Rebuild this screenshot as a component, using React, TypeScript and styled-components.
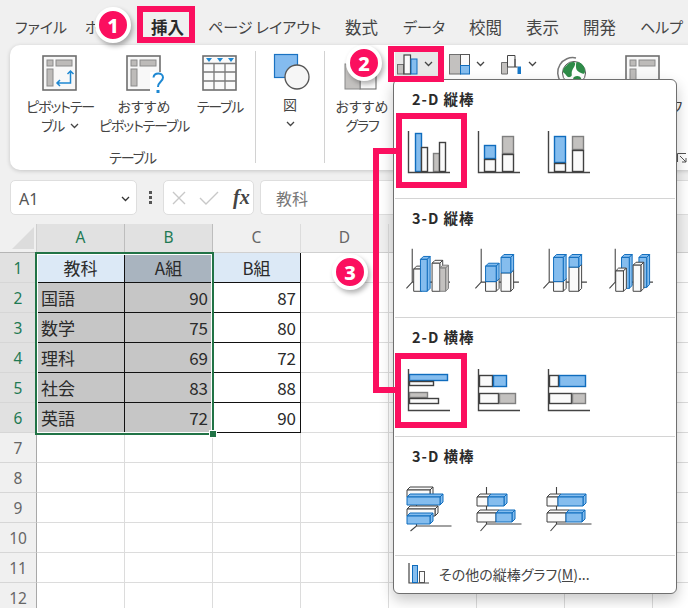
import React from 'react';
import styled, { createGlobalStyle } from 'styled-components';

const PINK = '#fb0f5f';
const BLUE = { f: '#85bdee', s: '#0f6cbd' };
const GRAY = { f: '#c3c1bf', s: '#7f7f7f' };
const WHITE = { f: '#fafafa', s: '#404040' };
type Tone = typeof BLUE;

const Global = createGlobalStyle`
  html, body { margin: 0; padding: 0; background: #f0f0f0; }
  * { box-sizing: border-box; }
  body { font-family: "Noto Sans CJK JP", "Noto Sans", sans-serif; font-feature-settings: "palt"; }
`;

const Page = styled.div`
  position: relative; width: 688px; height: 608px; overflow: hidden;
  background: #f0f0f0; display: flex; flex-direction: column; color: #333;
`;
const TabBar = styled.div`
  height: 45px; flex: none; display: flex; align-items: center; gap: 24px; padding: 0 0 0 15px; white-space: nowrap;
`;
const Tab = styled.span<{ $active?: boolean; $w: number; $kanji?: boolean }>`
  width: ${p => p.$w}px; flex: none;
  font-size: ${p => (p.$kanji ? 16.5 : 15)}px; line-height: 20px; margin-top: 9px;
  color: ${p => (p.$active ? '#2a2a2a' : '#454545')};
  font-weight: ${p => (p.$active ? 700 : 400)};
`;
const Ribbon = styled.div`
  position: relative; flex: none; height: 125px; margin-left: 10px; width: 700px; background: #fff;
  border-radius: 10px 0 0 10px; box-shadow: 0 1px 4px rgba(0,0,0,.18); display: flex;
`;
const Group = styled.div<{ $w: number }>`
  width: ${p => p.$w}px; flex: none; display: flex; flex-direction: column; align-items: stretch; padding-top: 7px;
`;
const GroupItems = styled.div`flex: 1; display: flex; align-items: flex-start;`;
const GroupLabel = styled.div`
  height: 23px; font-size: 14px; line-height: 20px; text-align: center; color: #444; letter-spacing: -1.1px;
`;
const Sep = styled.div`width: 1px; flex: none; margin: 6px 0 7px; background: #d2d2d2;`;
const RibbonBtn = styled.div<{ $w: number; $ml?: number; $iconH?: number }>`
  width: ${p => p.$w}px; margin-left: ${p => p.$ml ?? 0}px; flex: none; display: flex; flex-direction: column; align-items: center;
  font-size: 14px; line-height: 19px; color: #444; white-space: nowrap; text-align: center;
  & > svg:first-child { height: ${p => p.$iconH ?? 45}px; flex: none; overflow: visible; }
`;
const BtnLine = styled.div<{ $tight?: boolean }>`
  display: flex; align-items: center; justify-content: center; gap: 4px; height: 19px;
  letter-spacing: ${p => (p.$tight ? '-1.15px' : '0')};
`;
const MiniBtn = styled.div<{ $hover?: boolean }>`
  width: 52px; flex: none; height: 24px; display: flex; align-items: center; gap: 6px; padding-left: 2px;
  background: ${p => (p.$hover ? 'linear-gradient(#e8e8e8, #e8e8e8) no-repeat 0 0 / 44px 100%' : 'transparent')};
`;
const Launcher = styled.svg`position: absolute; left: 667px; top: 108px;`;

const FormulaBar = styled.div`
  flex: none; height: 35px; margin-top: 10px; display: flex; align-items: stretch; padding-left: 10px;
`;
const Field = styled.div<{ $w?: number }>`
  ${p => (p.$w ? `width: ${p.$w}px; flex: none;` : 'flex: 1;')}
  background: #fff; border: 1px solid #dedede; border-radius: 5px; display: flex; align-items: center;
`;
const NameBox = styled(Field)`padding: 2px 6px 0 8px; justify-content: space-between; font: 16px "Noto Sans", sans-serif; color: #555;`;
const Dots = styled.div`
  width: 26px; flex: none; display: flex; flex-direction: column; align-items: center; justify-content: center; gap: 2px;
`;
const Dot = styled.i`display: block; width: 3px; height: 3px; background: #555;`;
const FnBox = styled(Field)`padding: 0 0 0 8px; gap: 13px;`;
const Fx = styled.span`font: italic 700 20px "Liberation Serif", serif; color: #444; margin-left: 1px;`;
const FormulaInput = styled(Field)`margin-left: 6px; padding-left: 15px; font-size: 16px; color: #777; border-radius: 5px 0 0 5px; border-right: 0;`;

const Sheet = styled.div`
  margin-top: 9px; flex: none; display: grid; grid-template-columns: 37px repeat(8, 88px);
  grid-template-rows: 29px repeat(12, 30px); width: 741px;
`;
const Corner = styled.div`
  background: #f0f0f0; border-right: 1px solid #cfcfcf; border-bottom: 1px solid #b5b5b5; position: relative;
  &::after { content: ''; position: absolute; left: 12px; top: 3px; border-style: solid; border-width: 0 0 22px 22px; border-color: transparent transparent #dcdcdc transparent; }
`;
const ColHead = styled.div<{ $sel?: boolean }>`
  display: flex; align-items: center; justify-content: center; padding-bottom: 2px;
  font: 15.5px "Noto Sans", sans-serif;
  background: ${p => (p.$sel ? '#e1e1e1' : '#f0f0f0')};
  color: ${p => (p.$sel ? '#1f7a54' : '#666')};
  border-right: 1px solid ${p => (p.$sel ? '#bdbdbd' : '#dcdcdc')};
  border-bottom: 1px solid #d0d0d0;
`;
const RowHead = styled.div<{ $sel?: boolean }>`
  display: flex; align-items: center; justify-content: center;
  font: 15.5px "Noto Sans", sans-serif; width: 37px;
  background: ${p => (p.$sel ? '#e1e1e1' : '#f0f0f0')};
  color: ${p => (p.$sel ? '#1f7a54' : '#666')};
  border-right: 1px solid #a8a8a8; border-bottom: 1px solid #d6d6d6;
`;
const Cell = styled.div<{ $bg?: string; $align?: string; $table?: boolean }>`
  display: flex; align-items: center; padding: 0 4px; font-size: 17px; color: #2b2b2b; padding-bottom: 1px;
  justify-content: ${p => p.$align ?? 'flex-start'};
  background: ${p => p.$bg ?? '#fff'};
  border-right: 1px solid ${p => (p.$table ? '#111' : '#dcdcdc')};
  border-bottom: 1px solid ${p => (p.$table ? '#111' : '#dcdcdc')};
`;
const Selection = styled.div`
  position: absolute; left: 35px; top: 252px; width: 179px; height: 183px;
  border: 2px solid #217346; box-shadow: inset 0 0 0 1px #fff; pointer-events: none;
  &::after { content: ''; position: absolute; right: -4px; bottom: -4px; width: 6px; height: 6px; background: #217346; outline: 1px solid #fff; }
`;

const Menu = styled.div`
  position: absolute; left: 393px; top: 79px; width: 284px; height: 515px; background: #fff; border: 1px solid #6f6f6f;
  border-radius: 6px; box-shadow: 0 6px 14px rgba(0,0,0,.22); display: flex; flex-direction: column;
`;
const MenuSection = styled.div`height: 119px; flex: none; border-bottom: 1px solid #d4d4d4; margin: 0 1px;`;
const MenuHeader = styled.div`
  height: 46px; padding: 9px 0 0 17px; font-size: 14.5px; line-height: 20px; font-weight: 700; color: #2b2b2b; letter-spacing: 1px;
`;
const ChartRow = styled.div`display: flex; padding-left: 9px;`;
const MenuFoot = styled.div`flex: 1; display: flex; align-items: center; padding-left: 14px; gap: 10px; font-size: 14px; color: #444; padding-bottom: 2px;`;
const Mnemonic = styled.span`text-decoration: underline;`;

const Frame = styled.div<{ $x: number; $y: number; $w: number; $h: number }>`
  position: absolute; left: ${p => p.$x}px; top: ${p => p.$y}px; width: ${p => p.$w}px; height: ${p => p.$h}px;
  border: 6px solid ${PINK}; pointer-events: none;
`;
const Connector = styled.div`
  position: absolute; left: 373px; top: 148px; width: 23px; height: 245px;
  border: 6px solid ${PINK}; border-right: 0; pointer-events: none;
`;
const Badge = styled.div<{ $x: number; $y: number }>`
  position: absolute; left: ${p => p.$x - 18}px; top: ${p => p.$y - 18}px; width: 36px; height: 36px; border-radius: 50%;
  background: ${PINK}; border: 4px solid #fff; box-shadow: 2px 3px 5px rgba(0,0,0,.3); color: #fff;
  display: flex; align-items: center; justify-content: center; font: 800 20px "Noto Sans", sans-serif;
`;

const Chevron = ({ c = '#444' }: { c?: string }) => (
  <svg width="9" height="6" viewBox="0 0 9 6"><path d="M1 1l3.5 3.5L8 1" fill="none" stroke={c} strokeWidth="1.3" /></svg>
);

const R = ({ x, y, w, h, t }: { x: number; y: number; w: number; h: number; t: Tone }) => (
  <rect x={x + 0.5} y={y + 0.5} width={w - 1} height={h - 1} fill={t.f} stroke={t.s} strokeWidth={1.4} />
);
const Col2D = ({ children }: { children: React.ReactNode }) => (
  <svg width="70" height="50" viewBox="0 0 70 50">
    {children}
    <path d="M4.5 5V46.5H46" fill="none" stroke="#444" strokeWidth="1.4" />
  </svg>
);
const Box = ({ x, y, w, h, t, d = 3 }: { x: number; y: number; w: number; h: number; t: Tone; d?: number }) => (
  <g stroke={t.s} strokeWidth={1} strokeLinejoin="round">
    <path d={`M${x} ${y}l${d} ${-d}h${w}l${-d} ${d}z`} fill={t.f} />
    <path d={`M${x + w} ${y}l${d} ${-d}v${h}l${-d} ${d}z`} fill={t.f} />
    <rect x={x} y={y} width={w} height={h} fill={t.f} />
  </g>
);
const Col3D = ({ ax = 8.5, children }: { ax?: number; children: React.ReactNode }) => (
  <svg width="70" height="50" viewBox="0 0 70 50">
    <path d={`M${ax} 3V37.5L${ax - 6} 44M${ax} 37.5H${ax + 39}`} fill="none" stroke="#444" strokeWidth="1.1" />
    {children}
  </svg>
);
const Bar3D = ({ ax, gy = 43, children }: { ax: number; gy?: number; children: React.ReactNode }) => (
  <svg width="70" height="50" viewBox="0 0 70 50">
    <path d={`M${ax} 4V${gy}L${ax - 6} 48M${ax} ${gy}H${ax + 35}`} fill="none" stroke="#444" strokeWidth="1.1" />
    {children}
  </svg>
);

const PivotIcon = ({ w = 36, children }: { w?: number; children?: React.ReactNode }) => (
  <svg width={w} height="45" viewBox="0 0 36 45">
    <rect x="1" y="4" width="33" height="34" fill="#f8f8f8" stroke="#6e6e6e" strokeWidth="1.6" />
    <rect x="5" y="8" width="6" height="6" fill="#bdbbb9" stroke="#8a8a8a" />
    <rect x="14" y="8" width="16" height="6" fill="#bdbbb9" stroke="#8a8a8a" />
    <rect x="5" y="17" width="6" height="17" fill="#bdbbb9" stroke="#8a8a8a" />
    {children}
  </svg>
);
const TableIcon = () => (
  <svg width="36" height="45" viewBox="0 0 36 45">
    <rect x="1" y="4" width="33" height="34" fill="#fafafa" stroke="#6e6e6e" strokeWidth="1.6" />
    <path d="M1 11.5H34M1 20H34M1 29H34M12 11.5V38M23 11.5V38" stroke="#7a7a7a" strokeWidth="1.3" />
    <path d="M4 6h6l-3 4zM15 6h6l-3 4zM26 6h6l-3 4z" fill="#1e88d2" />
  </svg>
);
const ShapesIcon = () => (
  <svg width="40" height="43" viewBox="0 0 40 43">
    <rect x="4.5" y="2.5" width="23" height="23" fill="#84bbef" stroke="#1a72c2" strokeWidth="1.2" />
    <circle cx="27" cy="25" r="12" fill="#f6f6f6" stroke="#555" strokeWidth="1.3" />
  </svg>
);
const Globe = () => (
  <svg width="44" height="45" viewBox="0 0 44 45">
    <circle cx="23" cy="21" r="11.5" fill="#fff" stroke="#555" strokeWidth="1" />
    <path d="M10 30A15 15 0 0 1 25 6" fill="none" stroke="#777" strokeWidth="1.5" />
    <path d="M15 14c3-4 8-5 9-3s-2 5-3 8 1 5-2 6-4-3-6-4-1-5 2-7zM26 10c4 0 8 4 8 9s-4 2-6 1-3-3-3-5 0-5 1-5zM23 25c3-2 6-1 7 1s-3 5-5 5-4-4-2-6z" fill="#2e8b48" />
  </svg>
);

const FootIcon = () => (
  <svg width="21" height="21" viewBox="0 0 21 21">
    <path d="M1 0V20H21" fill="none" stroke="#444" strokeWidth="1.2" />
    <rect x="4.5" y="2.5" width="5" height="17" fill="#85bdee" stroke="#0f6cbd" />
    <rect x="11.5" y="8.5" width="5" height="11" fill="#fafafa" stroke="#555" />
  </svg>
);

const columnsHead = ['A', 'B', 'C', 'D', 'E', 'F', 'G', ''];
const tableRows: [string, string, string][] = [
  ['教科', 'A組', 'B組'],
  ['国語', '90', '87'],
  ['数学', '75', '80'],
  ['理科', '69', '72'],
  ['社会', '83', '88'],
  ['英語', '72', '90'],
];

const tabs = [
  { t: 'ファイル', w: 46 },
  { t: 'ホーム', w: 42 },
  { t: '挿入', w: 33, kanji: true, active: true },
  { t: 'ページ レイアウト', w: 113 },
  { t: '数式', w: 34, kanji: true },
  { t: 'データ', w: 42 },
  { t: '校閲', w: 33, kanji: true },
  { t: '表示', w: 33, kanji: true },
  { t: '開発', w: 33, kanji: true },
  { t: 'ヘルプ', w: 44 },
];

export default function App() {
  return (
    <Page>
      <Global />
      <TabBar>
        {tabs.map(t => <Tab key={t.t} $w={t.w} $kanji={t.kanji} $active={t.active}>{t.t}</Tab>)}
      </TabBar>

      <Ribbon>
        <Group $w={245}>
          <GroupItems>
            <RibbonBtn $w={76} $ml={12}>
              <PivotIcon>
                <path d="M15 31H28.5V19M25.5 22l3-3 3 3M18 28l-3 3 3 3" fill="none" stroke="#1e88d2" strokeWidth="1.5" />
              </PivotIcon>
              <BtnLine $tight>ピボットテー</BtnLine>
              <BtnLine $tight>ブル&nbsp;<Chevron /></BtnLine>
            </RibbonBtn>
            <RibbonBtn $w={92}>
              <PivotIcon>
                <rect x="24" y="20" width="13" height="22" fill="#fff" />
                <path d="M27.5 25.5c.5-5.5 9.5-5.5 9.5 0 0 4-5 4-5 9.5" fill="none" stroke="#1e88d2" strokeWidth="2" />
                <rect x="30.5" y="38" width="3" height="3" fill="#1e88d2" />
              </PivotIcon>
              <BtnLine>おすすめ</BtnLine>
              <BtnLine $tight>ピボットテーブル</BtnLine>
            </RibbonBtn>
            <RibbonBtn $w={54} $ml={3}>
              <TableIcon />
              <BtnLine $tight>テーブル</BtnLine>
            </RibbonBtn>
          </GroupItems>
          <GroupLabel>テーブル</GroupLabel>
        </Group>
        <Sep />
        <Group $w={68}>
          <GroupItems>
            <RibbonBtn $w={68} $iconH={43}>
              <ShapesIcon />
              <BtnLine>図</BtnLine>
              <BtnLine><Chevron /></BtnLine>
            </RibbonBtn>
          </GroupItems>
        </Group>
        <Sep />
        <Group $w={500}>
          <GroupItems>
            <RibbonBtn $w={66} $ml={4}>
              <svg width="36" height="45" viewBox="0 0 36 45">
                <rect x="16" y="3" width="16" height="34" fill="#fafafa" stroke="#666" />
                <rect x="1" y="12" width="15" height="25" fill="#c3c1bf" stroke="#888" />
              </svg>
              <BtnLine>おすすめ</BtnLine>
              <BtnLine $tight>グラフ</BtnLine>
            </RibbonBtn>
            <MiniBtn $hover>
              <svg width="21" height="21" viewBox="0 0 21 21">
                <rect x=".5" y="10.5" width="6" height="9.5" fill="#c3c1bf" stroke="#6f6f6f" />
                <rect x="7" y="1" width="6.5" height="19" fill="#fafafa" stroke="#444" strokeWidth="1.2" />
                <rect x="14" y="5" width="6" height="15" fill="#85bdee" stroke="#0f6cbd" />
              </svg>
              <Chevron />
            </MiniBtn>
            <MiniBtn>
              <svg width="21" height="21" viewBox="0 0 21 21">
                <rect x=".5" y=".5" width="11" height="19.5" fill="#c3c1bf" stroke="#6f6f6f" />
                <rect x="11.5" y=".5" width="9" height="11" fill="#fafafa" stroke="#555" />
                <rect x="11.5" y="11.5" width="9" height="8.5" fill="#85bdee" stroke="#0f6cbd" />
              </svg>
              <Chevron />
            </MiniBtn>
            <MiniBtn>
              <svg width="21" height="21" viewBox="0 0 21 21">
                <path d="M.5 8.5H6.5V20H.5z" fill="#c3c1bf" stroke="#6f6f6f" />
                <path d="M6.5 1.5H14V13H6.5z" fill="#fafafa" stroke="#444" />
                <path d="M16.5 12.5H20V20H16.5z" fill="#1878c8" />
                <path d="M14 5v8h2.5" fill="none" stroke="#444" />
              </svg>
              <Chevron />
            </MiniBtn>
            <RibbonBtn $w={44}><Globe /></RibbonBtn>
            <RibbonBtn $w={96}>
              <PivotIcon />
              <BtnLine $tight>ピボットグラフ</BtnLine>
            </RibbonBtn>
          </GroupItems>
        </Group>
        <Launcher width="10" height="10" viewBox="0 0 10 10">
          <path d="M.5 9V.5H9M3 3l6 6M9 5v4H5" fill="none" stroke="#555" />
        </Launcher>
      </Ribbon>

      <FormulaBar>
        <NameBox $w={127}>A1 <Chevron c="#333" /></NameBox>
        <Dots><Dot /><Dot /><Dot /></Dots>
        <FnBox $w={91}>
          <svg width="14" height="14" viewBox="0 0 14 14"><path d="M1 1l12 12M13 1L1 13" stroke="#c8c8c8" strokeWidth="1.4" /></svg>
          <svg width="20" height="14" viewBox="0 0 20 14"><path d="M1 7l6 6L19 1" fill="none" stroke="#c8c8c8" strokeWidth="1.4" /></svg>
          <Fx>fx</Fx>
        </FnBox>
        <FormulaInput>教科</FormulaInput>
      </FormulaBar>

      <Sheet>
        <Corner />
        {columnsHead.map((c, i) => <ColHead key={i} $sel={i < 2}>{c}</ColHead>)}
        {Array.from({ length: 12 }).map((_, r) => (
          <React.Fragment key={r}>
            <RowHead $sel={r < 6}>{r + 1}</RowHead>
            {columnsHead.map((_c, i) => {
              const row = tableRows[r];
              if (row && i < 3) {
                const head = r === 0;
                const bg = head ? (i === 1 ? '#a9b4bf' : '#dce9f6') : i < 2 ? '#c6c6c6' : '#fff';
                const align = head ? 'center' : i === 0 ? 'flex-start' : 'flex-end';
                return <Cell key={i} $bg={bg} $align={align} $table>{row[i]}</Cell>;
              }
              return <Cell key={i} />;
            })}
          </React.Fragment>
        ))}
      </Sheet>
      <Selection />

      <Menu>
        <MenuSection>
          <MenuHeader>2-D 縦棒</MenuHeader>
          <ChartRow>
            <Col2D><R x={11} y={7} w={7} h={39} t={BLUE} /><R x={17} y={21} w={7} h={25} t={WHITE} /><R x={29} y={27} w={7} h={19} t={GRAY} /><R x={35} y={16} w={7} h={30} t={WHITE} /></Col2D>
            <Col2D><R x={10} y={19} w={12} h={14} t={BLUE} /><R x={10} y={33} w={12} h={13} t={WHITE} /><R x={28} y={10} w={12} h={18} t={GRAY} /><R x={28} y={28} w={12} h={18} t={WHITE} /></Col2D>
            <Col2D><R x={10} y={10} w={12} h={27} t={BLUE} /><R x={10} y={37} w={12} h={9} t={WHITE} /><R x={28} y={10} w={12} h={14} t={GRAY} /><R x={28} y={24} w={12} h={22} t={WHITE} /></Col2D>
          </ChartRow>
        </MenuSection>
        <MenuSection>
          <MenuHeader>3-D 縦棒</MenuHeader>
          <ChartRow>
            <Col3D ax={8.5}><Box x={10} y={24} w={8} h={23} t={WHITE} /><Box x={17} y={14} w={7} h={33} t={BLUE} /><Box x={29} y={18} w={8} h={29} t={WHITE} /><Box x={37} y={23} w={6} h={24} t={GRAY} /></Col3D>
            <Col3D ax={9.5}><Box x={14} y={37} w={11} h={10} t={WHITE} /><Box x={14} y={21} w={11} h={16} t={BLUE} /><Box x={30} y={28} w={10} h={19} t={WHITE} /><Box x={30} y={12} w={10} h={16} t={BLUE} /></Col3D>
            <Col3D ax={9.5}><Box x={14} y={37} w={10} h={10} t={WHITE} /><Box x={14} y={12} w={10} h={25} t={BLUE} /><Box x={30} y={22} w={10} h={25} t={WHITE} /><Box x={30} y={12} w={10} h={10} t={BLUE} /></Col3D>
            <Col3D ax={8.5}><Box x={15} y={12} w={8} h={32} t={BLUE} /><Box x={33} y={12} w={8} h={31} t={BLUE} /><Box x={9} y={26} w={8} h={21} t={WHITE} /><Box x={27} y={20} w={8} h={27} t={WHITE} /></Col3D>
          </ChartRow>
        </MenuSection>
        <MenuSection>
          <MenuHeader>2-D 横棒</MenuHeader>
          <ChartRow>
            <Col2D><R x={5} y={10} w={39} h={7} t={BLUE} /><R x={5} y={17} w={25} h={5} t={WHITE} /><R x={5} y={28} w={19} h={6} t={GRAY} /><R x={5} y={34} w={30} h={6} t={WHITE} /></Col2D>
            <Col2D><R x={5} y={11} w={14} h={12} t={WHITE} /><R x={19} y={11} w={14} h={12} t={BLUE} /><R x={5} y={29} w={20} h={11} t={WHITE} /><R x={25} y={29} w={17} h={11} t={GRAY} /></Col2D>
            <Col2D><R x={5} y={11} w={10} h={12} t={WHITE} /><R x={15} y={11} w={27} h={12} t={BLUE} /><R x={5} y={29} w={23} h={11} t={WHITE} /><R x={28} y={29} w={14} h={11} t={GRAY} /></Col2D>
          </ChartRow>
        </MenuSection>
        <MenuSection>
          <MenuHeader>3-D 横棒</MenuHeader>
          <ChartRow>
            <Bar3D ax={12.5}><Box x={3} y={7} w={23} h={7} t={WHITE} /><Box x={3} y={14} w={33} h={8} t={BLUE} /><Box x={3} y={26} w={28} h={7} t={WHITE} /><Box x={3} y={33} w={23} h={8} t={BLUE} /></Bar3D>
            <Bar3D ax={12.5} gy={41}><Box x={3} y={14} w={11} h={9} t={WHITE} /><Box x={14} y={14} w={16} h={9} t={BLUE} /><Box x={3} y={30} w={19} h={9} t={WHITE} /><Box x={22} y={30} w={16} h={9} t={BLUE} /></Bar3D>
            <Bar3D ax={12.5} gy={41}><Box x={3} y={14} w={11} h={9} t={WHITE} /><Box x={14} y={14} w={25} h={9} t={BLUE} /><Box x={3} y={30} w={19} h={9} t={WHITE} /><Box x={22} y={30} w={16} h={9} t={BLUE} /></Bar3D>
          </ChartRow>
        </MenuSection>
        <MenuFoot>
          <FootIcon />
          <span>その他の縦棒グラフ(<Mnemonic>M</Mnemonic>)...</span>
        </MenuFoot>
      </Menu>

      <Connector />
      <Frame $x={137} $y={6} $w={58} $h={37} />
      <Frame $x={388} $y={46} $w={56} $h={36} />
      <Frame $x={396} $y={113} $w={71} $h={75} />
      <Frame $x={395} $y={353} $w={72} $h={75} />
      <Badge $x={113} $y={25}>1</Badge>
      <Badge $x={364} $y={63}>2</Badge>
      <Badge $x={350} $y={272}>3</Badge>
    </Page>
  );
}
